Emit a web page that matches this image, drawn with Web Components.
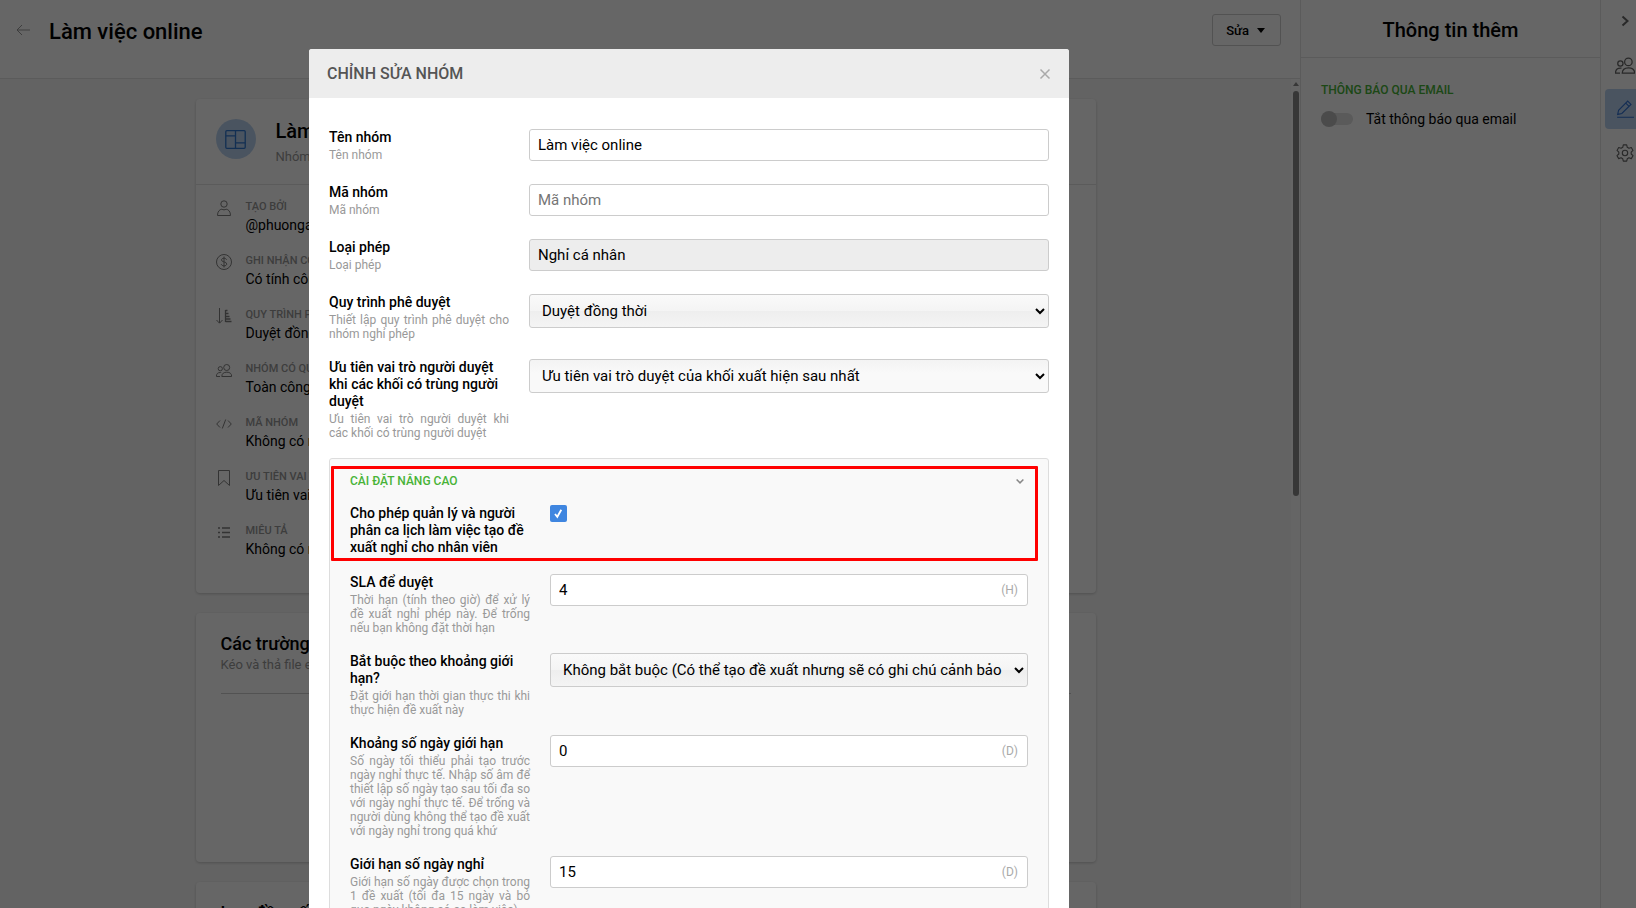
<!DOCTYPE html>
<html lang="vi">
<head>
<meta charset="utf-8">
<title>Làm việc online</title>
<style>
  html, body {
    height: 100%;
    margin: 0;
  }

  body {
    overflow: hidden;
    font: 14px/17px Roboto, "Noto Sans", sans-serif;
    color: #000;
    background: #fff;
    --border: #e3e3e3;
    --muted: #999;
    --green: #48b337;
    --blue: #3f86e0;
  }
</style>
</head>
<body>
<group-app>
  <main-view heading="Làm việc online">
    <info-card>
      <card-head heading="Làm việc" sub="Nhóm"></card-head>
      <info-row icon="user" label="Tạo bởi">@phuonganh</info-row>
      <info-row icon="dollar" label="Ghi nhận công">Có tính công</info-row>
      <info-row icon="sort" label="Quy trình phê">Duyệt đồng thời</info-row>
      <info-row icon="users" label="Nhóm có quyền">Toàn công ty</info-row>
      <info-row icon="code" label="Mã nhóm">Không có mã</info-row>
      <info-row icon="bookmark" label="Ưu tiên vai trò">Ưu tiên vai trò</info-row>
      <info-row icon="list" label="Miêu tả">Không có mô tả</info-row>
    </info-card>
    <section-card heading="Các trường" sub="Kéo và thả file excel"></section-card>
    <section-card heading="Lọc đề xuất tự" sub="Kéo và thả"></section-card>
  </main-view>
  <side-panel></side-panel>
  <icon-rail></icon-rail>
</group-app>

<modal-dialog heading="CHỈNH SỬA NHÓM">
  <form-field label="Tên nhóm" hint="Tên nhóm" value="Làm việc online"></form-field>
  <form-field label="Mã nhóm" hint="Mã nhóm" placeholder="Mã nhóm"></form-field>
  <form-field label="Loại phép" hint="Loại phép" value="Nghỉ cá nhân" readonly></form-field>
  <form-field type="select" label="Quy trình phê duyệt" hint="Thiết lập quy trình phê duyệt cho nhóm nghỉ phép" value="Duyệt đồng thời"></form-field>
  <form-field type="select" plain label="Ưu tiên vai trò người duyệt khi các khối có trùng người duyệt" hint="Ưu tiên vai trò người duyệt khi các khối có trùng người duyệt" value="Ưu tiên vai trò duyệt của khối xuất hiện sau nhất"></form-field>
  <advanced-box heading="CÀI ĐẶT NÂNG CAO">
    <form-field type="checkbox" label="Cho phép quản lý và người phân ca lịch làm việc tạo đề xuất nghỉ cho nhân viên"></form-field>
    <form-field label="SLA để duyệt" hint="Thời hạn (tính theo giờ) để xử lý đề xuất nghỉ phép này. Để trống nếu bạn không đặt thời hạn" value="4" unit="(H)"></form-field>
    <form-field type="select" label="Bắt buộc theo khoảng giới hạn?" hint="Đặt giới hạn thời gian thực thi khi thực hiện đề xuất này" value="Không bắt buộc (Có thể tạo đề xuất nhưng sẽ có ghi chú cảnh bảo"></form-field>
    <form-field label="Khoảng số ngày giới hạn" hint="Số ngày tối thiểu phải tạo trước ngày nghỉ thực tế. Nhập số âm để thiết lập số ngày tạo sau tối đa so với ngày nghỉ thực tế. Để trống và người dùng không thể tạo đề xuất với ngày nghỉ trong quá khứ" value="0" unit="(D)"></form-field>
    <form-field label="Giới hạn số ngày nghỉ" hint="Giới hạn số ngày được chọn trong 1 đề xuất (tối đa 15 ngày và bỏ qua ngày không có ca làm việc)." value="15" unit="(D)"></form-field>
  </advanced-box>
</modal-dialog>

<script>
  // every icon is drawn on a 16x16 grid
  const ICONS = {
    back: '<path d="M15 8H2M7 3L2 8l5 5"/>',
    user: '<circle cx="8" cy="4" r="3.2"/><path d="M1.5 15.5c0-4 2-6 4.300-6.300c1.400.8 3 .8 4.400 0c2.300.3 4.300 2.300 4.300 6.300z"/>',
    dollar: '<circle cx="8" cy="8" r="7.500"/><path d="M10.500 5.800C10.200 4.700 9.200 4.200 8 4.200c-1.500 0-2.500.7-2.500 1.800C5.500 8.600 10.700 7.200 10.700 10c0 1.200-1.100 1.900-2.700 1.900c-1.500 0-2.500-.7-2.800-1.900M8 2.500v11"/>',
    sort: '<path d="M3.500 0v15M.5 12l3 3.200l3-3.200"/><path d="M9.500 2.500h2M9.500 5.500h3M9.500 8.500h4M9.500 11h5M9.500 13.500h6M9.500 2v12" stroke-width="1.300"/>',
    users: '<g transform="translate(0 1)"><circle cx="4.300" cy="5.700" r="2.100"/><circle cx="10.700" cy="4.500" r="3"/><path d="M5.800 13.500c0-3 2-4.300 5-4.300s4.900 1.300 4.900 4.300zM4 13.500H.4c0-2.800 1.300-4 4-4h.8"/></g>',
    code: '<path d="M4 4.500L.7 8L4 11.500M12 4.500L15.300 8L12 11.500M9.700 3.500l-3.400 9"/>',
    bookmark: '<path d="M2.500.5h11v15L8 10.500l-5.500 5z"/>',
    list: '<path d="M6 4h8M6 8.500h8M6 13h8M2 4h2M2 8.500h2M2 13h2" stroke-width="1.300"/>',
    layout: '<rect x=".6" y="1.300" width="14.800" height="13.400" rx=".8"/><path d="M8 1.300v13.400M.6 5.300H8M8 10.500h7.400"/>',
    chevron: '<path d="M5.500 3.500L10.500 8l-5 4.500"/>',
    down: '<path d="M3.500 6L8 10.500L12.500 6"/>',
    close: '<path d="M2 2l12 12M14 2L2 14"/>',
    pencil: '<path d="M1.500 12.800l.8-3.700L10.400 1l2.900 2.900L5.200 12zM8.700 2.700l2.900 2.900M1 15.300h15"/>',
    gear: '<circle cx="8" cy="8" r="2.400"/><path d="M6.500.8h3l.5 2.100l1.500.9l2.100-.7l1.500 2.600L13.500 7.200v1.700l1.600 1.500l-1.500 2.600l-2.100-.7l-1.500.9l-.5 2h-3L6 13.200l-1.500-.9l-2.100.7L.9 10.400l1.600-1.500V7.200L.9 5.700l1.500-2.600l2.100.7L6 2.900z" stroke-linejoin="round"/>',
  };

  function icon(name, size, width = 1) {
    return `<svg width="${size}" height="${size}" viewBox="0 0 16 16" fill="none" stroke="currentColor" stroke-width="${width}" aria-hidden="true">${ICONS[name]}</svg>`;
  }

  class BaseElement extends HTMLElement {
    connectedCallback() {
      if (this.shadowRoot) return;
      this.attachShadow({ mode: "open" });
      this.shadowRoot.innerHTML = `
        <style>
          * { box-sizing: border-box; }
          h1, h2, h3, p { margin: 0; font-weight: 500; }
          svg { display: block; flex: none; }
          button { font: inherit; padding: 0; border: 0; background: none; cursor: pointer; }
        </style>
        ${this.render()}`;
    }

    attr(name) {
      return this.getAttribute(name) || "";
    }
  }

  class GroupApp extends BaseElement {
    render() {
      return `
        <style>
          :host {
            display: grid;
            grid-template-columns: minmax(0, 1fr) 300px 36px;
            height: 100vh;
          }
        </style>
        <slot></slot>`;
    }
  }

  class MainView extends BaseElement {
    render() {
      return `
        <style>
          :host {
            display: flex;
            flex-direction: column;
            min-height: 0;
          }

          header {
            display: flex;
            align-items: flex-start;
            height: 79px;
            padding: 14px 19px 0 15px;
            border-bottom: 1px solid var(--border);
          }

          .back {
            color: #999;
            height: 32px;
          }

          h1 {
            flex: 1;
            margin-left: 18px;
            font-size: 22px;
            line-height: 36px;
          }

          .edit {
            display: flex;
            align-items: center;
            gap: 8px;
            height: 32px;
            padding: 0 15px 0 13px;
            border: 1px solid #ccc;
            border-radius: 3px;
            font-size: 13px;
            font-weight: 500;
          }

          .edit i {
            border: 4px solid transparent;
            border-top: 5px solid #000;
            border-bottom: 0;
          }

          .scroll {
            display: flex;
            flex: 1;
            min-height: 0;
            background: #f8f8f8;
          }

          .content {
            display: flex;
            flex-direction: column;
            flex: 1;
            gap: 20px;
            overflow: hidden;
            padding: 20px calc((100% - 909px) / 2) 0;
          }

          .bar {
            display: flex;
            flex-direction: column;
            align-items: center;
            gap: 5px;
            width: 9px;
            padding-top: 3px;
            background: #fcfcfc;
          }

          .bar::before {
            content: "";
            border: 3px solid transparent;
            border-bottom: 4px solid #8b8b8b;
            border-top: 0;
          }

          .bar::after {
            content: "";
            width: 6px;
            height: 49%;
            border-radius: 3px;
            background: #8b8b8b;
          }
        </style>
        <header>
          <button class="back" aria-label="Quay lại">${icon("back", 16)}</button>
          <h1>${this.attr("heading")}</h1>
          <button class="edit">Sửa <i></i></button>
        </header>
        <div class="scroll">
          <div class="content"><slot></slot></div>
          <div class="bar"></div>
        </div>`;
    }
  }

  class InfoCard extends BaseElement {
    render() {
      return `
        <style>
          :host {
            display: block;
            flex: none;
            padding-bottom: 22px;
            border-radius: 4px;
            background: #fff;
            box-shadow: 0 1px 3px rgba(0, 0, 0, .2);
          }
        </style>
        <slot></slot>`;
    }
  }

  class CardHead extends BaseElement {
    render() {
      return `
        <style>
          :host {
            display: flex;
            gap: 20px;
            height: 86px;
            box-sizing: border-box;
            padding: 20px;
            margin-bottom: 8px;
            border-bottom: 1px solid var(--border);
          }

          .avatar {
            display: grid;
            place-items: center;
            width: 40px;
            height: 40px;
            border-radius: 50%;
            background: #bad3f0;
            color: #2f76cf;
          }

          h2 {
            font-size: 20px;
            line-height: 24px;
          }

          p {
            margin-top: 5px;
            font-size: 13px;
            font-weight: 400;
            color: var(--muted);
          }
        </style>
        <div class="avatar">${icon("layout", 21)}</div>
        <div>
          <h2>${this.attr("heading")}</h2>
          <p>${this.attr("sub")}</p>
        </div>`;
    }
  }

  class InfoRow extends BaseElement {
    render() {
      return `
        <style>
          :host {
            display: flex;
            gap: 14px;
            height: 54px;
            box-sizing: border-box;
            padding: 6px 20px 0;
          }

          svg {
            margin-top: 1px;
            color: #808080;
          }

          .label {
            font-size: 11px;
            line-height: 16px;
            font-weight: 500;
            text-transform: uppercase;
            color: var(--muted);
          }

          .value {
            line-height: 20px;
          }
        </style>
        ${icon(this.attr("icon"), 16)}
        <div>
          <div class="label">${this.attr("label")}</div>
          <div class="value"><slot></slot></div>
        </div>`;
    }
  }

  class SectionCard extends BaseElement {
    render() {
      return `
        <style>
          :host {
            display: block;
            flex: none;
            height: 249px;
            box-sizing: border-box;
            padding: 19px 25px;
            border-radius: 4px;
            background: #fff;
            box-shadow: 0 1px 3px rgba(0, 0, 0, .2);
          }

          header {
            height: 62px;
            border-bottom: 1px solid #ccc;
          }

          h2 {
            font-size: 18px;
            line-height: 24px;
          }

          p {
            font-size: 13px;
            font-weight: 400;
            color: var(--muted);
          }
        </style>
        <header>
          <h2>${this.attr("heading")}</h2>
          <p>${this.attr("sub")}</p>
        </header>`;
    }
  }

  class SidePanel extends BaseElement {
    render() {
      return `
        <style>
          :host {
            display: block;
            border-left: 1px solid var(--border);
          }

          h2 {
            height: 58px;
            border-bottom: 1px solid var(--border);
            font-size: 20px;
            line-height: 60px;
            text-align: center;
          }

          section {
            padding: 24px 20px;
          }

          h3 {
            font-size: 12px;
            line-height: 16px;
            color: var(--green);
          }

          label {
            display: flex;
            align-items: center;
            gap: 13px;
            margin-top: 12px;
            line-height: 18px;
          }

          input {
            appearance: none;
            display: flex;
            align-items: center;
            width: 32px;
            height: 12px;
            margin: 0;
            border-radius: 6px;
            background: #e0e0e0;
          }

          input::before {
            content: "";
            width: 16px;
            height: 16px;
            border-radius: 50%;
            background: #bbb;
          }
        </style>
        <h2>Thông tin thêm</h2>
        <section>
          <h3>THÔNG BÁO QUA EMAIL</h3>
          <label><input type="checkbox"> Tắt thông báo qua email</label>
        </section>`;
    }
  }

  class IconRail extends BaseElement {
    render() {
      return `
        <style>
          :host {
            display: flex;
            flex-direction: column;
            align-items: flex-end;
            gap: 4px;
            padding-top: 1px;
            border-left: 1px solid var(--border);
          }

          button {
            display: flex;
            align-items: center;
            justify-content: center;
            width: 31px;
            height: 40px;
            padding-left: 9px;
            border-radius: 4px 0 0 4px;
            color: #666;
          }

          .active {
            background: #bad3f0;
            color: #3070d0;
          }
        </style>
        <button aria-label="Thu gọn">${icon("chevron", 16, 2)}</button>
        <button aria-label="Thành viên">${icon("users", 20)}</button>
        <button class="active" aria-label="Chỉnh sửa">${icon("pencil", 18)}</button>
        <button aria-label="Cài đặt">${icon("gear", 18)}</button>`;
    }
  }

  class ModalDialog extends BaseElement {
    render() {
      return `
        <style>
          :host {
            position: fixed;
            inset: 0;
            display: flex;
            justify-content: center;
            align-items: flex-start;
            padding: 49px 258px 0 0;
            overflow: hidden;
            background: rgba(0, 0, 0, .6);
          }

          .box {
            width: 760px;
            border-radius: 3px 3px 0 0;
            background: #fff;
            overflow: hidden;
          }

          header {
            display: flex;
            align-items: center;
            justify-content: space-between;
            height: 49px;
            padding: 0 18px;
            background: #ededed;
            color: #555;
          }

          h2 {
            font-size: 16px;
          }

          .close {
            height: 16px;
            color: #aaa;
          }

          form {
            padding: 31px 20px;
          }
        </style>
        <div class="box" role="dialog" aria-modal="true">
          <header>
            <h2>${this.attr("heading")}</h2>
            <button class="close" aria-label="Đóng">${icon("close", 12, 2)}</button>
          </header>
          <form><slot></slot></form>
        </div>`;
    }
  }

  class FormField extends BaseElement {
    control() {
      const value = this.attr("value");
      switch (this.attr("type")) {
        case "select":
          return `<select id="f"><option>${value}</option></select>`;
        case "checkbox":
          return `<span class="check"><input id="f" type="checkbox" checked><svg width="17" height="17" viewBox="0 0 17 17" aria-hidden="true"><path d="M5 9l2.300 2.800L11.300 4.800" fill="none" stroke="#fff" stroke-width="1.800"/></svg></span>`;
        default:
          return `
            <input id="f" type="text" value="${value}" placeholder="${this.attr("placeholder")}" ${this.hasAttribute("readonly") ? "readonly" : ""}>
            <span class="unit">${this.attr("unit")}</span>`;
      }
    }

    render() {
      const hint = this.attr("hint");
      return `
        <style>
          :host {
            display: grid;
            grid-template-columns: 180px minmax(0, 1fr);
            align-items: start;
            gap: 20px;
            min-height: 37px;
            margin-bottom: 18px;
          }

          label {
            display: block;
            font-weight: 500;
          }

          p {
            margin-top: 2px;
            font-size: 12px;
            line-height: 14px;
            font-weight: 400;
            text-align: justify;
            color: var(--muted);
          }

          .control {
            display: grid;
            align-items: center;
          }

          .control > * {
            grid-area: 1 / 1;
          }

          input[type="text"], select {
            width: 100%;
            height: 32px;
            margin: 0;
            padding: 0 8px;
            border: 1px solid #ccc;
            border-radius: 3px;
            font: inherit;
            font-size: 15px;
            color: #000;
            background: #fff;
          }

          input::placeholder {
            color: #757575;
          }

          input[readonly] {
            background: #ededed;
          }

          select {
            height: 34px;
            background: linear-gradient(#fafafa, #f4f4f4 50%, #eee 50%, #f4f4f4);
          }

          :host([plain]) select {
            background: linear-gradient(#f3f3f3, #f9f9f9 40%);
          }

          .unit {
            justify-self: end;
            padding-right: 10px;
            font-size: 12px;
            color: #aaa;
          }

          .check {
            display: grid;
            width: 17px;
            height: 17px;
          }

          .check > * {
            grid-area: 1 / 1;
          }

          .check input {
            appearance: none;
            margin: 0;
            border-radius: 2px;
            background: var(--blue);
          }

          .check svg {
            pointer-events: none;
          }
        </style>
        <div>
          <label for="f">${this.attr("label")}</label>
          ${hint ? `<p>${hint}</p>` : ""}
        </div>
        <div class="control">${this.control()}</div>`;
    }
  }

  class AdvancedBox extends BaseElement {
    render() {
      return `
        <style>
          :host {
            display: block;
            position: relative;
            padding: 14px 20px;
            border: 1px solid #ddd;
            border-radius: 3px;
            background: #f9f9f9;
          }

          header {
            display: flex;
            align-items: center;
            justify-content: space-between;
            height: 16px;
            margin-bottom: 16px;
          }

          h3 {
            font-size: 12px;
            line-height: 14px;
            color: var(--green);
          }

          button {
            margin-right: 2px;
            color: #888;
          }

          /* frame that highlights the first setting */
          .mark {
            position: absolute;
            top: 7px;
            left: 1px;
            right: 10px;
            height: 95px;
            border: 3px solid #f00;
            border-radius: 1px;
            pointer-events: none;
          }
        </style>
        <header>
          <h3>${this.attr("heading")}</h3>
          <button type="button" aria-label="Thu gọn">${icon("down", 12, 2)}</button>
        </header>
        <slot></slot>
        <div class="mark"></div>`;
    }
  }

  customElements.define("group-app", GroupApp);
  customElements.define("main-view", MainView);
  customElements.define("info-card", InfoCard);
  customElements.define("card-head", CardHead);
  customElements.define("info-row", InfoRow);
  customElements.define("section-card", SectionCard);
  customElements.define("side-panel", SidePanel);
  customElements.define("icon-rail", IconRail);
  customElements.define("modal-dialog", ModalDialog);
  customElements.define("form-field", FormField);
  customElements.define("advanced-box", AdvancedBox);
</script>
</body>
</html>
